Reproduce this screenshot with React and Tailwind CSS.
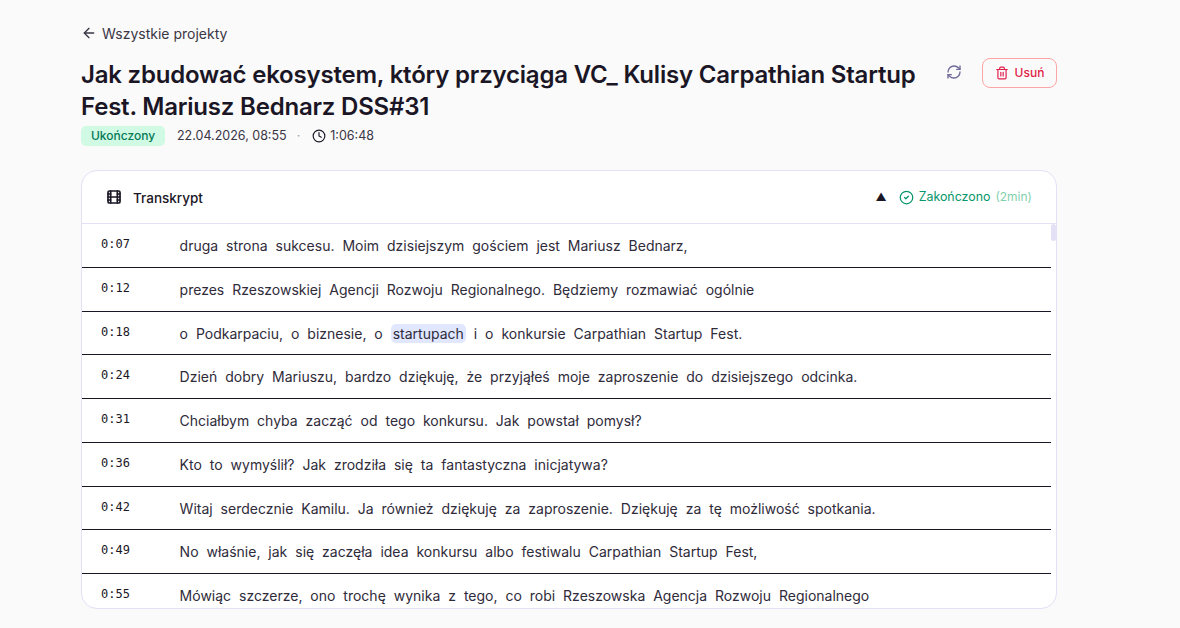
import React from "react";
import { ArrowLeft, RefreshCw, Trash2, Clock, Film, CircleCheck } from "lucide-react";

const rows = [
  { t: "0:07", text: "druga strona sukcesu. Moim dzisiejszym gościem jest Mariusz Bednarz," },
  { t: "0:12", text: "prezes Rzeszowskiej Agencji Rozwoju Regionalnego. Będziemy rozmawiać ogólnie" },
  { t: "0:18", before: "o Podkarpaciu, o biznesie, o ", mark: "startupach", text: " i o konkursie Carpathian Startup Fest." },
  { t: "0:24", text: "Dzień dobry Mariuszu, bardzo dziękuję, że przyjąłeś moje zaproszenie do dzisiejszego odcinka." },
  { t: "0:31", text: "Chciałbym chyba zacząć od tego konkursu. Jak powstał pomysł?" },
  { t: "0:36", text: "Kto to wymyślił? Jak zrodziła się ta fantastyczna inicjatywa?" },
  { t: "0:42", text: "Witaj serdecznie Kamilu. Ja również dziękuję za zaproszenie. Dziękuję za tę możliwość spotkania." },
  { t: "0:49", text: "No właśnie, jak się zaczęła idea konkursu albo festiwalu Carpathian Startup Fest," },
  { t: "0:55", text: "Mówiąc szczerze, ono trochę wynika z tego, co robi Rzeszowska Agencja Rozwoju Regionalnego" },
];

export default function App() {
  return (
    <div className="h-[628px] overflow-hidden bg-[#fafafa] font-['Inter',sans-serif] text-[#1a1625]">
      <div className="w-[976px] ml-[81px] pt-[24px]">
        <div className="flex items-center gap-[5px] h-[18px] text-[14px] text-[#3a3645]">
          <ArrowLeft size={16} strokeWidth={2} />
          <span>Wszystkie projekty</span>
        </div>

        <div className="flex items-start mt-[17px]">
          <h1 className="w-[850px] text-[24px] leading-[32px] font-semibold tracking-[-0.2px]">
            Jak zbudować ekosystem, który przyciąga VC_ Kulisy Carpathian Startup Fest. Mariusz Bednarz DSS#31
          </h1>
          <RefreshCw size={16} strokeWidth={2} className="ml-[15px] mt-[5px] text-[#6f6a9a]" />
          <button className="ml-auto mt-[-1px] h-[30px] w-[75px] flex items-center justify-center gap-[6px] rounded-[8px] border border-[#fca5a5] text-[12px] font-medium text-[#e11d48]">
            <Trash2 size={14} strokeWidth={2} />
            Usuń
          </button>
        </div>

        <div className="flex items-center mt-[3px] h-[20px] text-[12.5px] text-[#3a3645]">
          <span className="h-[20px] w-[84px] flex items-center justify-center rounded-[5px] bg-[#d1fae5] text-[12px] font-medium text-[#047857]">Ukończony</span>
          <span className="ml-[12px]">22.04.2026, 08:55</span>
          <span className="ml-[10px] text-gray-400">·</span>
          <Clock size={14} strokeWidth={2} className="ml-[12px] text-[#1a1625]" />
          <span className="ml-[4px]">1:06:48</span>
        </div>

        <section className="mt-[24px] h-[439px] flex flex-col overflow-hidden rounded-[16px] border border-[#e4e0f5] bg-white">
          <header className="h-[53px] shrink-0 flex items-center pl-[24px] pr-[24px] border-b border-[#e4e0f5]">
            <Film size={16} strokeWidth={2.5} className="text-[#1a1625]" />
            <span className="ml-[11px] pt-[2px] text-[13.5px] font-medium">Transkrypt</span>
            <span className="ml-auto text-[11px] leading-none text-[#1a1625]">▲</span>
            <CircleCheck size={15} strokeWidth={2} className="ml-[12px] text-[#059669]" />
            <span className="ml-[5px] text-[12.4px] text-[#059669]">Zakończono</span>
            <span className="ml-[5px] text-[12px] text-[#7fd1ae]">(2min)</span>
          </header>

          <div className="flex flex-1 min-h-0">
            <div className="flex-1 min-w-0 overflow-hidden">
              {rows.map((r) => (
                <div key={r.t} className="h-[43.75px] flex border-b border-[#1a1625]">
                  <span className="w-[97.6px] shrink-0 pl-[19px] pt-[12px] font-['DejaVu_Sans_Mono',monospace] text-[12px] leading-[16px]">{r.t}</span>
                  <p className="pt-[12px] text-[14px] leading-[20px] [word-spacing:4px] text-[#2f2b3a]">
                    {r.before}
                    {r.mark && <span className="rounded-[5px] bg-[#e0e7ff] px-[2px] py-[1px]">{r.mark}</span>}
                    {r.text}
                  </p>
                </div>
              ))}
            </div>
            <div className="w-[5px] shrink-0">
              <div className="h-[17px] rounded-[3px] bg-[#e4e0f5]" />
            </div>
          </div>
        </section>
      </div>
    </div>
  );
}
